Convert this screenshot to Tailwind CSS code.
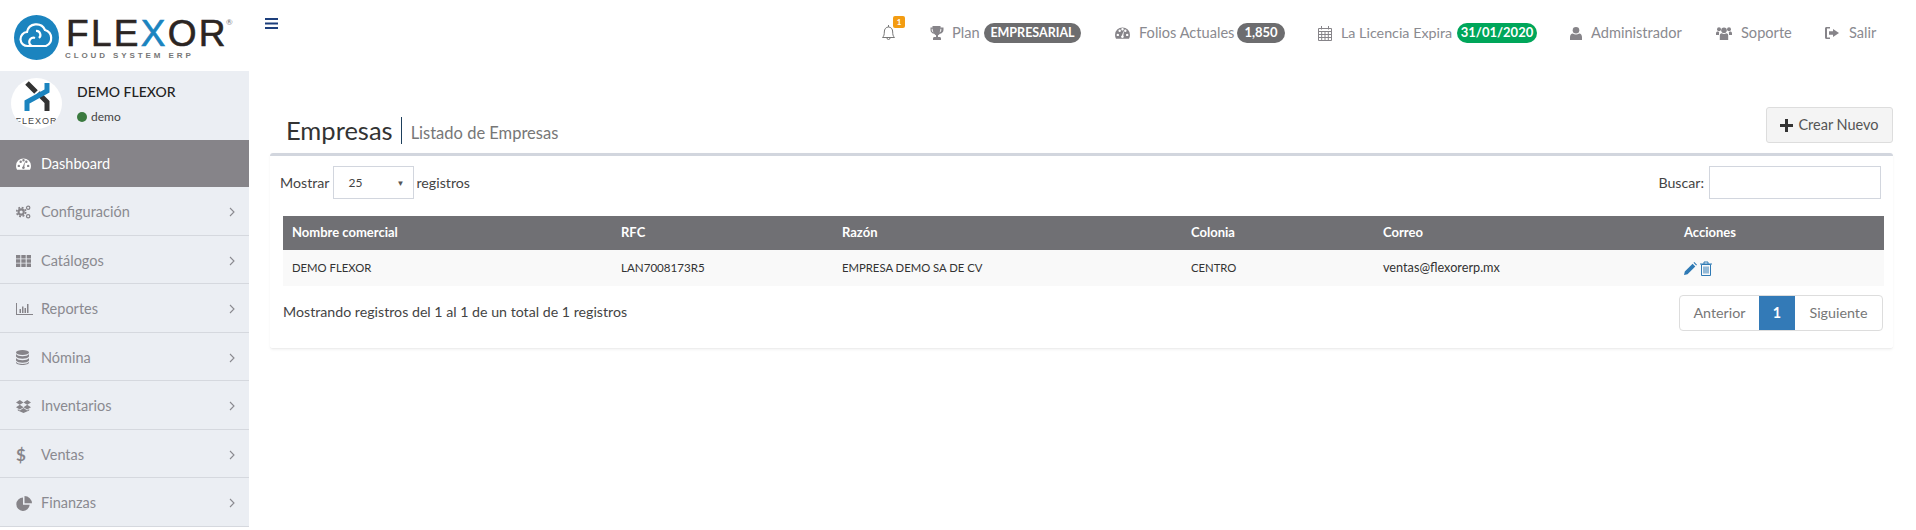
<!DOCTYPE html>
<html lang="es">
<head>
  <meta charset="UTF-8" />
  <title>Flexor - Empresas</title>
  <script src="https://cdn.jsdelivr.net/npm/@tailwindcss/browser@4"></script>
</head>
<body class="h-[530px] overflow-hidden bg-white font-['Lato','Noto_Sans',sans-serif] text-[14.200px] text-[#444]">
  <svg class="hidden">
    <symbol id="i-gauge" viewBox="0 0 16 12"><path fill-rule="evenodd" d="M8 0a8 8 0 0 0-8 8c0 1.500.4 2.900 1.100 4h13.800a8 8 0 0 0 1.100-4 8 8 0 0 0-8-8zM3 9.300a1.300 1.300 0 1 1 0-2.600 1.300 1.300 0 0 1 0 2.600zM5 4.800a1.300 1.300 0 1 1 0-2.600 1.300 1.300 0 0 1 0 2.600zM8 3.300a1.300 1.300 0 1 1 0-2.600 1.300 1.300 0 0 1 0 2.600zM13 9.300a1.300 1.300 0 1 1 0-2.600 1.300 1.300 0 0 1 0 2.600zM11 4.800a1.300 1.300 0 1 1 0-2.600 1.300 1.300 0 0 1 0 2.600zM9.300 10.300a1.500 1.500 0 0 1-2.800 0 1.500 1.500 0 0 1 .9-1.700L9 4.200l.4.100-.5 4.500c.4.300.5.900.4 1.500z"/></symbol>
  </svg>

  <div class="flex h-[530px]">
    <aside class="w-[249px] shrink-0 overflow-hidden">
      <div class="relative h-[71px] bg-white">
        <svg class="absolute left-[14px] top-[15px] h-[45px] w-[45px]" viewBox="0 0 45 45">
          <circle cx="22.500" cy="22.500" r="22.500" fill="#1b84bf" />
          <path d="M14 31a7 7 0 0 1-1-14 9.500 9.500 0 0 1 18-2 8.500 8.500 0 0 1 1 16z M21 23a4 4 0 1 0-3 8 M22 16a4 4 0 0 1 3 7" fill="none" stroke="#fff" stroke-width="2.200" />
        </svg>
        <div class="absolute left-[66px] top-[15px] text-[37px] leading-[37px] tracking-[2.300px] text-[#2b2523] [-webkit-text-stroke:0.6px] font-['Liberation_Sans',sans-serif]">FLE<span class="text-[#1b84bf]">X</span>OR</div>
        <div class="absolute left-[226px] top-[18px] text-[8px] leading-[8px] text-[#777]">®</div>
        <div class="absolute left-[65px] top-[51px] whitespace-nowrap text-[8px] font-bold leading-[9px] tracking-[2.900px] text-[#777] font-['Liberation_Sans',sans-serif]">CLOUD SYSTEM ERP</div>
      </div>

      <div class="flex h-[69px] items-start bg-[#ebeef3] pl-[11px] pt-[7px]">
        <div class="flex h-[51px] w-[51px] shrink-0 flex-col items-center overflow-hidden rounded-full bg-white pt-[3px]">
          <svg class="h-[31px] w-[28px]" viewBox="0 0 28 31">
            <path d="M4 2l9 9M24 30V21L15 12" fill="none" stroke="#333" stroke-width="5" />
            <path d="M24 2v8L4 21v9" fill="none" stroke="#1b84bf" stroke-width="5" />
          </svg>
          <div class="mt-[5px] text-[9px] leading-[9px] tracking-[1px] text-[#444] font-['Liberation_Sans',sans-serif]">FLEXOR</div>
        </div>
        <div class="pl-[15px]">
          <div class="mt-[4px] text-[14px] font-medium leading-[20px] text-[#222]">DEMO FLEXOR</div>
          <div class="mt-[7px] flex items-center gap-[4px] text-[12px] leading-[16px] text-[#444]">
            <span class="h-[10px] w-[10px] rounded-full bg-[#3b7a3f]"></span>demo
          </div>
        </div>
      </div>

      <nav class="text-[14.500px]">
        <a class="flex h-[47px] items-center bg-[#868489] pl-[16px] text-white">
          <svg class="mr-[10px] h-[12px] w-[15px] fill-white"><use href="#i-gauge" /></svg>Dashboard
        </a>
        <a class="flex h-[49px] items-center border-b border-[#d5d8de] bg-[#ebeef3] pl-[16px] pr-[14px] pt-[2px] text-[#8a8a90]">
          <svg class="mr-[10px] h-[14px] w-[15px] stroke-[#868489]" viewBox="0 0 16 15" fill="none">
            <circle cx="5.500" cy="7.500" r="2.800" stroke-width="2.200" />
            <circle cx="5.500" cy="7.500" r="4.800" stroke-width="1.800" stroke-dasharray="2 1.770" />
            <circle cx="13" cy="3" r="1.800" stroke-width="1.300" />
            <circle cx="13" cy="12" r="1.800" stroke-width="1.300" />
          </svg>
          Configuración
          <svg class="ml-auto h-[10px] w-[6px] stroke-[#8a8a90]" viewBox="0 0 6 10" fill="none"><path d="M1 1l4 4-4 4" stroke-width="1.100" /></svg>
        </a>
        <a class="flex h-[48px] items-center border-b border-[#d5d8de] bg-[#ebeef3] pl-[16px] pr-[14px] pt-[2px] text-[#8a8a90]">
          <svg class="mr-[10px] h-[12px] w-[15px] fill-[#868489]" viewBox="0 0 15 12"><path d="M0 0h4.300v3.400H0zM5.300 0h4.400v3.400H5.300zM10.700 0H15v3.400h-4.300zM0 4.300h4.300v3.400H0zM5.300 4.300h4.400v3.400H5.300zM10.700 4.300H15v3.400h-4.300zM0 8.600h4.300V12H0zM5.300 8.600h4.400V12H5.300zM10.700 8.600H15V12h-4.300z"/></svg>
          Catálogos
          <svg class="ml-auto h-[10px] w-[6px] stroke-[#8a8a90]" viewBox="0 0 6 10" fill="none"><path d="M1 1l4 4-4 4" stroke-width="1.100" /></svg>
        </a>
        <a class="flex h-[49px] items-center border-b border-[#d5d8de] bg-[#ebeef3] pl-[16px] pr-[14px] pt-[2px] text-[#8a8a90]">
          <svg class="mr-[8px] h-[12px] w-[17px] fill-[#868489]" viewBox="0 0 17 12"><path d="M0 0h1v11h16v1H0zM3.500 6H5v4H3.500zM6 3.500h1.500V10H6zM8.500 5H10v5H8.500zM11 1h1.500v9H11z"/></svg>
          Reportes
          <svg class="ml-auto h-[10px] w-[6px] stroke-[#8a8a90]" viewBox="0 0 6 10" fill="none"><path d="M1 1l4 4-4 4" stroke-width="1.100" /></svg>
        </a>
        <a class="flex h-[48px] items-center border-b border-[#d5d8de] bg-[#ebeef3] pl-[16px] pr-[14px] pt-[2px] text-[#8a8a90]">
          <svg class="mr-[12px] h-[15px] w-[13px] fill-[#868489]" viewBox="0 0 13 15"><ellipse cx="6.500" cy="2.500" rx="6.500" ry="2.500"/><path d="M0 4c1 1.600 3.500 2.200 6.500 2.200S12 5.600 13 4v2.500c-1 1.600-3.500 2.200-6.500 2.200S1 8.100 0 6.500zM0 8c1 1.600 3.500 2.200 6.500 2.200S12 9.600 13 8v2.500c-1 1.600-3.500 2.200-6.500 2.200S1 12.100 0 10.500zM0 11.700c1 1.600 3.500 2.200 6.500 2.200s5.500-.6 6.500-2.200v.8c0 1.400-3 2.500-6.500 2.500S0 13.900 0 12.500z"/></svg>
          Nómina
          <svg class="ml-auto h-[10px] w-[6px] stroke-[#8a8a90]" viewBox="0 0 6 10" fill="none"><path d="M1 1l4 4-4 4" stroke-width="1.100" /></svg>
        </a>
        <a class="flex h-[49px] items-center border-b border-[#d5d8de] bg-[#ebeef3] pl-[16px] pr-[14px] pt-[2px] text-[#8a8a90]">
          <svg class="mr-[10px] h-[13px] w-[15px] fill-[#868489]" viewBox="0 0 15 13"><path d="M3.800 0l3.700 2.400L3.800 4.800 0 2.400zM11.200 0L15 2.400l-3.800 2.400-3.700-2.400zM3.800 4.800l3.700 2.400-3.700 2.400L0 7.200zM11.200 4.800L15 7.200l-3.800 2.400-3.700-2.400zM7.500 8l3.700 2.400 2-1.300v1.300L7.500 13l-5.700-2.600V9.100l2 1.300z"/></svg>
          Inventarios
          <svg class="ml-auto h-[10px] w-[6px] stroke-[#8a8a90]" viewBox="0 0 6 10" fill="none"><path d="M1 1l4 4-4 4" stroke-width="1.100" /></svg>
        </a>
        <a class="flex h-[48px] items-center border-b border-[#d5d8de] bg-[#ebeef3] pl-[16px] pr-[14px] pt-[2px] text-[#8a8a90]">
          <span class="w-[25px] text-[17px] font-bold text-[#868489]">$</span>
          Ventas
          <svg class="ml-auto h-[10px] w-[6px] stroke-[#8a8a90]" viewBox="0 0 6 10" fill="none"><path d="M1 1l4 4-4 4" stroke-width="1.100" /></svg>
        </a>
        <a class="flex h-[49px] items-center border-b border-[#d5d8de] bg-[#ebeef3] pl-[16px] pr-[14px] pt-[2px] text-[#8a8a90]">
          <svg class="mr-[9px] h-[15px] w-[16px] fill-[#868489]" viewBox="0 0 16 15"><path d="M7 1.500a6.700 6.700 0 1 0 6.700 7.300H7zM8.500 0v7.300H16A7.500 7.500 0 0 0 8.500 0z"/></svg>
          Finanzas
          <svg class="ml-auto h-[10px] w-[6px] stroke-[#8a8a90]" viewBox="0 0 6 10" fill="none"><path d="M1 1l4 4-4 4" stroke-width="1.100" /></svg>
        </a>
      </nav>
    </aside>

    <main class="min-w-0 flex-1 pl-[21px] pr-[23px]">
      <header class="relative flex h-[67px] items-start pt-[23px] text-[14.600px] text-[#8a8a90]">
        <svg class="absolute -left-[5px] top-[18px] h-[11px] w-[13px] fill-[#1d3f7c]" viewBox="0 0 13 11"><path d="M0 0h13v2H0zM0 4.500h13v2H0zM0 9h13v2H0z"/></svg>
        <div class="ml-auto mr-[15px] flex h-[20px] items-center">
          <div class="relative mr-[33px] h-[16px] w-[15px]">
            <svg class="h-[16px] w-[15px] stroke-[#777]" viewBox="0 0 14 16" fill="none"><path d="M1 12.500c1.500-1.500 1.800-3 1.800-5.500C2.800 4 4.500 2 7 2s4.200 2 4.200 5c0 2.500.3 4 1.800 5.500zM5.500 13a1.500 1.500 0 0 0 3 0M7 0v2" stroke-width="1" /></svg>
            <span class="absolute -top-[9px] left-[12px] flex h-[12px] w-[12px] items-center justify-center rounded-[2px] bg-[#f39c12] text-[8px] font-bold leading-none text-white">1</span>
          </div>
          <svg class="mr-[8px] h-[14px] w-[15px] fill-[#868489]" viewBox="0 0 14 14"><path fill-rule="evenodd" d="M3 0h8v1.500h3V4c0 2-1.700 3.600-3.700 3.800-.5.700-1.200 1.200-1.800 1.500V11h1.500c1 0 1.500.6 1.500 1.500V14H3.500v-1.500C3.500 11.600 4 11 5 11h1.500V9.300c-.6-.3-1.300-.8-1.800-1.500C2.700 7.600 1 6 1 4V1.500h2zM2.200 2.700V4c0 1 .8 2 1.800 2.400-.6-1-.9-2.200-1-3.700zm9.600 0H11c-.1 1.500-.4 2.700-1 3.700 1-.4 1.800-1.400 1.800-2.400z"/></svg>
          <span class="w-[32px]">Plan</span>
          <span class="flex h-[20px] w-[97px] items-center justify-center rounded-full bg-[#6d6d6f] text-[12.500px] font-bold text-white">EMPRESARIAL</span>
          <svg class="ml-[34px] mr-[9px] h-[12px] w-[15px] fill-[#868489]"><use href="#i-gauge" /></svg>
          <span class="w-[98px] whitespace-nowrap">Folios Actuales</span>
          <span class="flex h-[20px] w-[48px] items-center justify-center rounded-full bg-[#6d6d6f] text-[13px] font-bold text-white">1,850</span>
          <svg class="ml-[33px] mr-[9px] h-[15px] w-[14px] stroke-[#868489]" viewBox="0 0 14 15" fill="none"><path d="M.5 2.500h13v12H.5zM.5 5.500h13M3.500 0v3.500M10.500 0v3.500M.5 8.500h13M.5 11.500h13M3.700 5.500v9M7 5.500v9M10.300 5.500v9" stroke-width="1"/></svg>
          <span class="w-[116px] whitespace-nowrap text-[14.300px]">La Licencia Expira</span>
          <span class="flex h-[20px] w-[80px] items-center justify-center rounded-full bg-[#00a65a] text-[13px] font-bold text-white">31/01/2020</span>
          <svg class="ml-[33px] mr-[9px] h-[13px] w-[12px] fill-[#868489]" viewBox="0 0 12 13"><circle cx="6" cy="3.300" r="3.300"/><path d="M0 13v-3c0-2 1.200-3.300 2.800-3.500.9.700 2 1.100 3.200 1.100s2.300-.4 3.200-1.100C10.800 6.700 12 8 12 10v3z"/></svg>
          <span class="w-[125px] whitespace-nowrap">Administrador</span>
          <svg class="mr-[9px] h-[13px] w-[16px] fill-[#868489]" viewBox="0 0 16 13"><circle cx="3" cy="2.200" r="2"/><circle cx="13" cy="2.200" r="2"/><circle cx="8" cy="3.200" r="2.800"/><path d="M0 8V6.300C0 5.200.8 4.600 1.800 4.600c.4.300.8.500 1.300.5L3 8zM16 8V6.300c0-1.100-.8-1.700-1.800-1.700-.4.300-.8.500-1.300.5L13 8zM3.800 13V8.500c0-1.500 1-2.300 2-2.300.6.500 1.400.8 2.200.8s1.600-.3 2.200-.8c1 0 2 .8 2 2.300V13z"/></svg>
          <span class="w-[84px]">Soporte</span>
          <svg class="mr-[10px] h-[12px] w-[14px] fill-[#868489]" viewBox="0 0 14 12"><path d="M1.500 0H5v1.500H2v9h3V12H1.500C.6 12 0 11.400 0 10.500v-9C0 .6.600 0 1.500 0zM8 2l6 4-6 4V7.700H4V4.300h4z"/></svg>
          <span class="w-[29px] whitespace-nowrap">Salir</span>
        </div>
      </header>

      <div class="flex h-[86px] items-end justify-between pb-[3px]">
        <div class="flex items-end pb-[6px] pl-[16px]">
          <h1 class="border-r border-[#1d3f5c] pr-[8px] text-[25.500px] font-normal leading-[27px] text-[#333]">Empresas</h1>
          <small class="pl-[9px] text-[16.500px] leading-[22px] text-[#777]">Listado de Empresas</small>
        </div>
        <button class="mb-[7px] flex h-[36px] w-[127px] items-center justify-center gap-[5px] rounded-[3px] border border-[#ddd] bg-[#f4f4f4] text-[14.500px] text-[#555]">
          <svg class="h-[13px] w-[13px] fill-[#333]" viewBox="0 0 13 13"><path d="M5 0h3v5h5v3H8v5H5V8H0V5h5z"/></svg>Crear Nuevo
        </button>
      </div>

      <section class="h-[196px] rounded-[3px] border-t-[3px] border-b border-t-[#d2d6de] border-b-[#eee] px-[10px] pt-[10px] shadow-[0_1px_3px_rgba(0,0,0,0.05)]">
        <div class="flex h-[33px] items-center justify-between pr-[2px] text-[#444]">
          <div class="flex items-center">
            Mostrar
            <div class="mx-[3px] flex h-[33px] w-[81px] items-center justify-between border border-[#d2d6de] pl-[15px] pr-[8px] text-[12px]">25<span class="text-[8px] text-[#555]">▼</span></div>
            registros
          </div>
          <label class="flex items-center gap-[5px]">Buscar:<span class="h-[33px] w-[172px] border border-[#d2d6de]"></span></label>
        </div>
        <table class="ml-[3px] mt-[17px] w-[1601px] table-fixed border-collapse text-left text-[12.700px]">
          <colgroup><col class="w-[329px]"><col class="w-[221px]"><col class="w-[349px]"><col class="w-[192px]"><col class="w-[301px]"><col></colgroup>
          <thead class="bg-[#707074] text-[13px] text-white">
            <tr class="h-[34px]">
              <th class="pl-[9px] font-bold">Nombre comercial</th>
              <th class="pl-[9px] font-bold">RFC</th>
              <th class="pl-[9px] font-bold">Razón</th>
              <th class="pl-[9px] font-bold">Colonia</th>
              <th class="pl-[9px] font-bold">Correo</th>
              <th class="pl-[9px] font-bold">Acciones</th>
            </tr>
          </thead>
          <tbody class="text-[#333]">
            <tr class="h-[36px] bg-[#f9f9f9]">
              <td class="pl-[9px] text-[11.300px]">DEMO FLEXOR</td>
              <td class="pl-[9px] text-[11.600px]">LAN7008173R5</td>
              <td class="pl-[9px] text-[11.300px]">EMPRESA DEMO SA DE CV</td>
              <td class="pl-[9px] text-[11.300px]">CENTRO</td>
              <td class="pl-[9px]">ventas@flexorerp.mx</td>
              <td class="pl-[9px]">
                <div class="flex items-center gap-[3px]">
                  <svg class="h-[13px] w-[13px] fill-[#2f7ab5]" viewBox="0 0 13 13"><path d="M0 13l.8-3.500L8.600 1.700l2.700 2.700-7.800 7.800zM9.500.8l.8-.8 2.700 2.700-.8.8z"/></svg>
                  <svg class="h-[15px] w-[12px] stroke-[#2f7ab5]" viewBox="0 0 12 15" fill="none"><path d="M0 3h12M4 3V1h4v2M1.500 3.500h9v11h-9zM4 5.500v7M6 5.500v7M8 5.500v7" stroke-width="1"/></svg>
                </div>
              </td>
            </tr>
          </tbody>
        </table>
        <div class="mt-[9px] flex items-center justify-between pl-[3px]">
          <span class="mb-[3px]">Mostrando registros del 1 al 1 de un total de 1 registros</span>
          <div class="flex h-[36px] overflow-hidden rounded-[4px] border border-[#ddd] text-[14.300px] text-[#777]">
            <span class="flex w-[79px] items-center justify-center">Anterior</span>
            <span class="flex w-[36px] items-center justify-center bg-[#337ab7] font-bold text-white">1</span>
            <span class="flex w-[87px] items-center justify-center">Siguiente</span>
          </div>
        </div>
      </section>
    </main>
  </div>
</body>
</html>
